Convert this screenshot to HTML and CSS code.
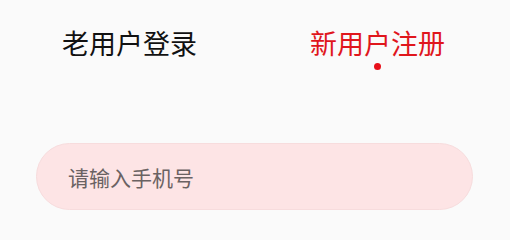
FILE: index.html
```html
<!DOCTYPE html>
<html lang="zh-CN">
<head>
<meta charset="utf-8">
<link rel="stylesheet" href="styles.css">
</head>
<body>
<div class="tabs">
  <div class="tab">老用户登录</div>
  <div class="tab active">新用户注册<span class="dot"></span></div>
</div>
<div class="form">
  <input class="field" type="text" placeholder="请输入手机号">
</div>
</body>
</html>
```
FILE: styles.css
```css
html, body {
  margin: 0;
  background: #fafafa;
  font-family: "Noto Sans CJK SC", "Noto Sans", sans-serif;
}
.tabs {
  display: flex;
  justify-content: space-between;
  align-items: flex-start;
  padding: 29px 65px 0 62px;
}
.tab {
  display: flex;
  flex-direction: column;
  align-items: center;
  font-size: 27px;
  line-height: 27px;
  color: #111;
}
.tab.active {
  color: #e0161c;
}
.dot {
  width: 7px;
  height: 7px;
  margin-top: 7px;
  border-radius: 50%;
  background: #e8101a;
}
.form {
  padding: 73px 37px 0 36px;
}
.field {
  display: block;
  box-sizing: border-box;
  width: 100%;
  height: 67px;
  margin: 0;
  padding: 0 0 0 31px;
  border: 1px solid #f7dcdd;
  border-radius: 34px;
  background: #fde4e5;
  font-family: "Noto Sans CJK SC", "Noto Sans", sans-serif;
  font-size: 21px;
  color: #333;
  outline: none;
}
.field::placeholder {
  color: #6a6262;
}
```
